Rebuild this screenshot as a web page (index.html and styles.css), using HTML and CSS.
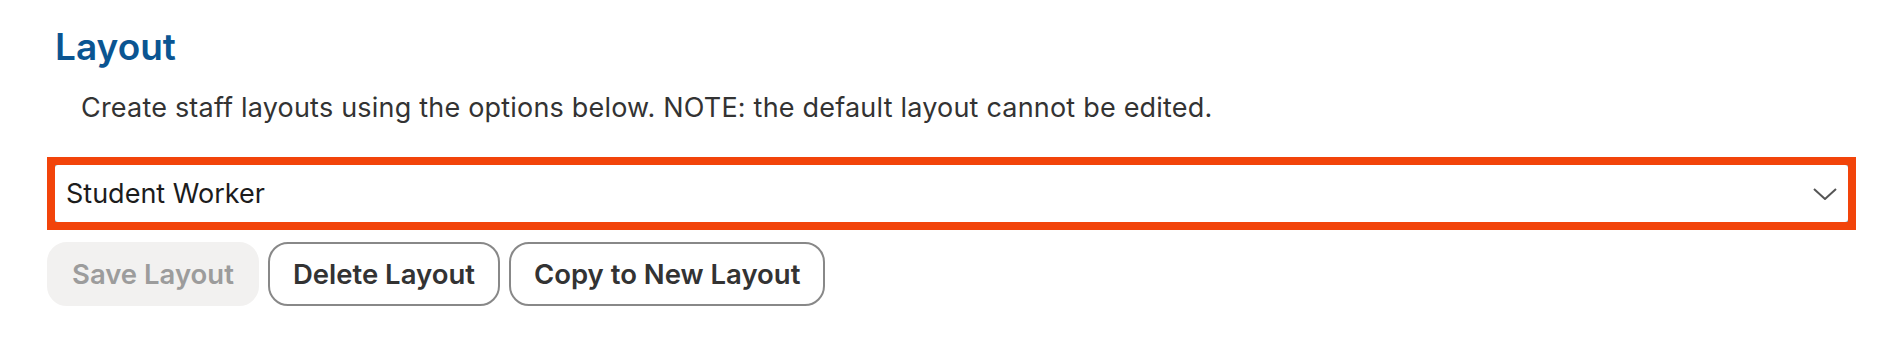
FILE: index.html
```html
<!DOCTYPE html>
<html lang="en">
<head>
<meta charset="UTF-8" />
<meta name="viewport" content="width=device-width, initial-scale=1" />
<title>Layout</title>
<link rel="stylesheet" href="styles.css">
</head>
<body>

<div class="panel">
  <h2 class="panel-title">Layout</h2>
  <p class="panel-note">Create staff layouts using the options below. NOTE: the default layout cannot be edited.</p>

  <div class="select-ring">
    <div class="select-box">
      <span class="select-value">Student Worker</span>
      <svg class="chevron" viewBox="0 0 24 12">
        <path d="M1 1l11 10L23 1"/>
      </svg>
    </div>
  </div>

  <div class="actions">
    <button class="btn" disabled>Save Layout</button>
    <button class="btn btn-outline">Delete Layout</button>
    <button class="btn btn-outline">Copy to New Layout</button>
  </div>
</div>

</body>
</html>
```

FILE: styles.css
```css
body {
  margin: 0;
  background: #fff;
  font-family: Inter, 'Noto Sans', sans-serif;
  color: #333;
}
.panel {
  padding: 25px 44px 0 47px;
}
.panel-title {
  margin: 0 0 0 8px;
  font-size: 37px;
  font-weight: 600;
  color: #0a5592;
  line-height: 44px;
}
.panel-note {
  margin: 24px 0 0 34px;
  font-size: 27px;
  letter-spacing: 0.2px;
  line-height: 30px;
  color: #333;
}
.select-ring {
  margin-top: 34px;
  border: 8px solid #f2440a;
  background: #8a8a8a;
}
.select-box {
  background: #fff;
  border-radius: 3px;
  height: 57px;
  display: flex;
  align-items: center;
  justify-content: space-between;
  padding: 0 11px 0 11px;
}
.select-value {
  font-size: 27px;
  color: #1c1c1c;
}
.chevron {
  width: 24px;
  height: 12px;
  fill: none;
  stroke: #555;
  stroke-width: 2;
}
.actions {
  display: flex;
  gap: 9px;
  margin-top: 12px;
}
.btn {
  font-family: inherit;
  font-size: 27.5px;
  font-weight: 600;
  height: 64px;
  padding: 0 23px;
  border-radius: 20px;
  border: 2px solid #888;
  background: #fff;
  color: #333;
  cursor: pointer;
}
.btn[disabled] {
  border-color: #f2f1f0;
  background: #f2f1f0;
  color: #9c9c9c;
  cursor: default;
}
```
